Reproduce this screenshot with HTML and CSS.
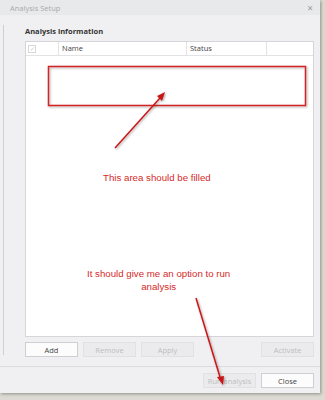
FILE: index.html
```html
<!DOCTYPE html>
<html lang="en">

    <head>
        <meta charset="UTF-8">
        <meta name="viewport" content="width=device-width, initial-scale=1.0">
        <title>Analysis Setup</title>

        <link rel="stylesheet" href="styles.css">
    </head>

    <body>
        <div class="dialog">
            <div class="titlebar">
                <span>Analysis Setup</span>
                <span class="close-x">&#215;</span>
            </div>
            <div class="content">
                <div class="side"></div>
                <div class="main">
                    <div class="heading">Analysis information</div>
                    <div class="grid">
                        <div class="grid-head">
                            <div class="cell cell-check"><span class="checkbox">&#10003;</span></div>
                            <div class="cell cell-icon"></div>
                            <div class="cell cell-name">Name</div>
                            <div class="cell cell-status">Status</div>
                            <div class="cell cell-rest"></div>
                        </div>
                    </div>
                    <div class="actions">
                        <button class="btn">Add</button>
                        <button class="btn" disabled>Remove</button>
                        <button class="btn" disabled>Apply</button>
                        <span class="spacer"></span>
                        <button class="btn" disabled>Activate</button>
                    </div>
                </div>
            </div>
            <div class="footer">
                <button class="btn" disabled>Run analysis</button>
                <button class="btn">Close</button>
            </div>
        </div>

        <!-- annotations drawn over the screenshot -->
        <div class="notes">
            <svg class="notes-svg" width="325" height="400" viewBox="0 0 325 400">
                <defs>
                    <filter id="shadow" x="-10%" y="-10%" width="130%" height="130%">
                        <feDropShadow dx="1" dy="1" stdDeviation="0.8" flood-color="#000" flood-opacity="0.35" />
                    </filter>
                </defs>
                <rect x="48.5" y="66.5" width="257" height="39" fill="none" stroke="#d02828" stroke-width="1.5" filter="url(#shadow)" />
                <g filter="url(#shadow)">
                    <line x1="115" y1="148" x2="160" y2="98" stroke="#c81818" stroke-width="1.5" />
                    <polygon points="165,92 157,96 162,101" fill="#c81818" />
                    <line x1="196" y1="298" x2="220" y2="377" stroke="#c81818" stroke-width="1.5" />
                    <polygon points="223,385 217,377 224,376" fill="#c81818" />
                </g>
            </svg>
            <div class="note note-fill">This area should be filled</div>
            <div class="note note-run">It should give me an option to run<br>analysis</div>
        </div>
    </body>

</html>
```

FILE: styles.css
```css
body {
    margin: 0;
    width: 325px;
    height: 400px;
    background-color: #dcdad2;
    font-family: "Open Sans", "Noto Sans", sans-serif;
    position: relative;
    overflow: hidden;
}

.dialog {
    width: 320px;
    height: 393px;
    background-color: #f0f0f2;
    display: flex;
    flex-direction: column;
    box-shadow: 1px 1px 3px rgba(0, 0, 0, 0.35);
}

.titlebar {
    height: 15px;
    padding: 0 7px 0 10px;
    display: flex;
    align-items: center;
    justify-content: space-between;
    background-color: #e8e9eb;
    color: #a9a9ab;
    font-size: 7.5px;
}

.close-x {
    font-size: 10px;
    color: #9a9a9c;
}

.content {
    flex: 1;
    display: flex;
}

.side {
    width: 21px;
    height: 330px;
    margin: 10px 0 0 3px;
    border-left: 1px solid #cfcfd3;
}

.main {
    flex: 1;
    padding: 10px 6px 0 0;
    display: flex;
    flex-direction: column;
}

.heading {
    height: 12px;
    line-height: 12px;
    margin-bottom: 4px;
    font-size: 7.5px;
    font-weight: bold;
    color: #333;
}

.grid {
    width: 287px;
    height: 294px;
    background-color: #fff;
    border: 1px solid #d6d6da;
}

.grid-head {
    height: 13px;
    display: flex;
    border-bottom: 1px solid #e2e2e4;
}

.cell {
    font-size: 7.5px;
    color: #444;
    line-height: 13px;
    padding-left: 3px;
    border-right: 1px solid #e2e2e4;
    box-sizing: border-box;
}

.cell-check {
    width: 12px;
    border-right: none;
    padding-left: 2px;
    display: flex;
    align-items: center;
}

.checkbox {
    width: 6px;
    height: 6px;
    border: 1px solid #d8d8d8;
    font-size: 6px;
    line-height: 6px;
    color: #c8c8c8;
    text-align: center;
}

.cell-icon {
    width: 21px;
}

.cell-name {
    width: 128px;
}

.cell-status {
    width: 80px;
}

.cell-rest {
    flex: 1;
    border-right: none;
}

.actions {
    margin-top: 5px;
    display: flex;
    gap: 5px;
}

.spacer {
    flex: 1;
}

.btn {
    width: 53px;
    height: 15px;
    padding: 0;
    font-family: "Open Sans", "Noto Sans", sans-serif;
    font-size: 7.5px;
    color: #444;
    background-color: #fcfcfc;
    border: 1px solid #cfcfd2;
}

.btn:disabled {
    color: #bdbdc0;
    background-color: #ebebed;
    border-color: #e1e1e3;
}

.footer {
    margin-top: 9px;
    border-top: 1px solid #dcdcdf;
    padding: 6px 6px 5px 0;
    display: flex;
    justify-content: flex-end;
    gap: 5px;
}

.notes {
    position: absolute;
    inset: 0;
    pointer-events: none;
}

.notes-svg {
    position: absolute;
    left: 0;
    top: 0;
}

.note {
    position: absolute;
    font-family: "Liberation Sans", Arial, sans-serif;
    font-size: 9.7px;
    line-height: 12.5px;
    color: #d42a2a;
    text-align: center;
}

.note-fill {
    left: 103px;
    top: 172px;
}

.note-run {
    left: 87px;
    top: 268px;
}
```
